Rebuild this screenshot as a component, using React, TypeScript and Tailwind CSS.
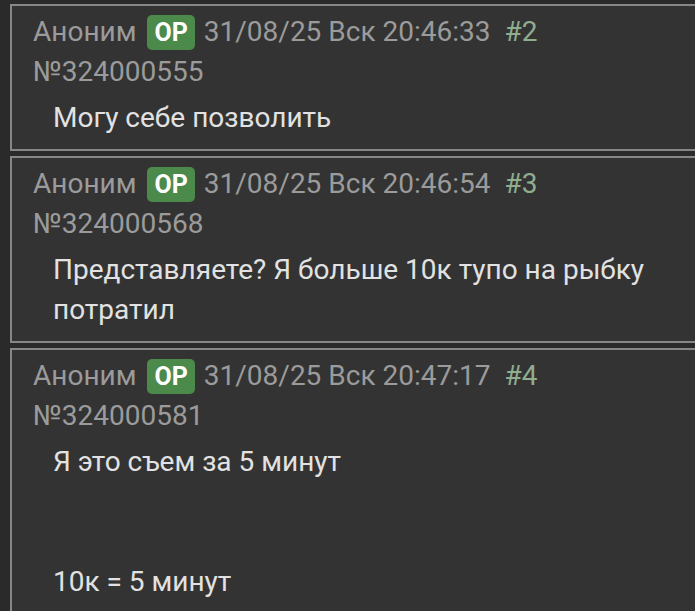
const posts = [
  {
    num: "324000555",
    time: "31/08/25 Вск 20:46:33",
    idx: "#2",
    lines: ["Могу себе позволить"],
  },
  {
    num: "324000568",
    time: "31/08/25 Вск 20:46:54",
    idx: "#3",
    lines: ["Представляете? Я больше 10к тупо на рыбку потратил"],
  },
  {
    num: "324000581",
    time: "31/08/25 Вск 20:47:17",
    idx: "#4",
    lines: ["Я это съем за 5 минут", "", "", "10к = 5 минут"],
  },
];

function Post({ post }: { post: (typeof posts)[number] }) {
  return (
    <div className="w-[720px] shrink-0 border-2 border-r-0 border-[#878787] bg-[#333333] pl-[21px] pt-[6px] pb-[11px]">
      {/* шапка поста */}
      <div className="flex items-center leading-[40px] text-[#9b9b9b]">
        <span>Аноним</span>
        <span className="ml-[11px] flex h-[35px] items-center rounded-[5px] bg-[#4b8a4b] px-[7px] text-[25px] font-bold leading-none text-white">
          OP
        </span>
        <span className="ml-[9px]">{post.time}</span>
        <span className="ml-[14px] text-[#8fae8f]">{post.idx}</span>
      </div>
      <div className="leading-[40px] text-[#9b9b9b]">№{post.num}</div>
      {/* текст */}
      <div className="mt-[6px] w-[640px] pl-[20px] leading-[40px] text-[#e2e2e2]">
        {post.lines.map((l, i) => (
          <div key={i} className="min-h-[40px]">
            {l}
          </div>
        ))}
      </div>
    </div>
  );
}

export default function App() {
  return (
    <div
      className="flex h-[611px] flex-col gap-[5px] overflow-hidden bg-[#2a2a2a] pl-[10px] pt-[4px] text-[28px]"
      style={{ fontFamily: "Roboto, 'Noto Sans', sans-serif" }}
    >
      {posts.map((p) => (
        <Post key={p.num} post={p} />
      ))}
    </div>
  );
}
